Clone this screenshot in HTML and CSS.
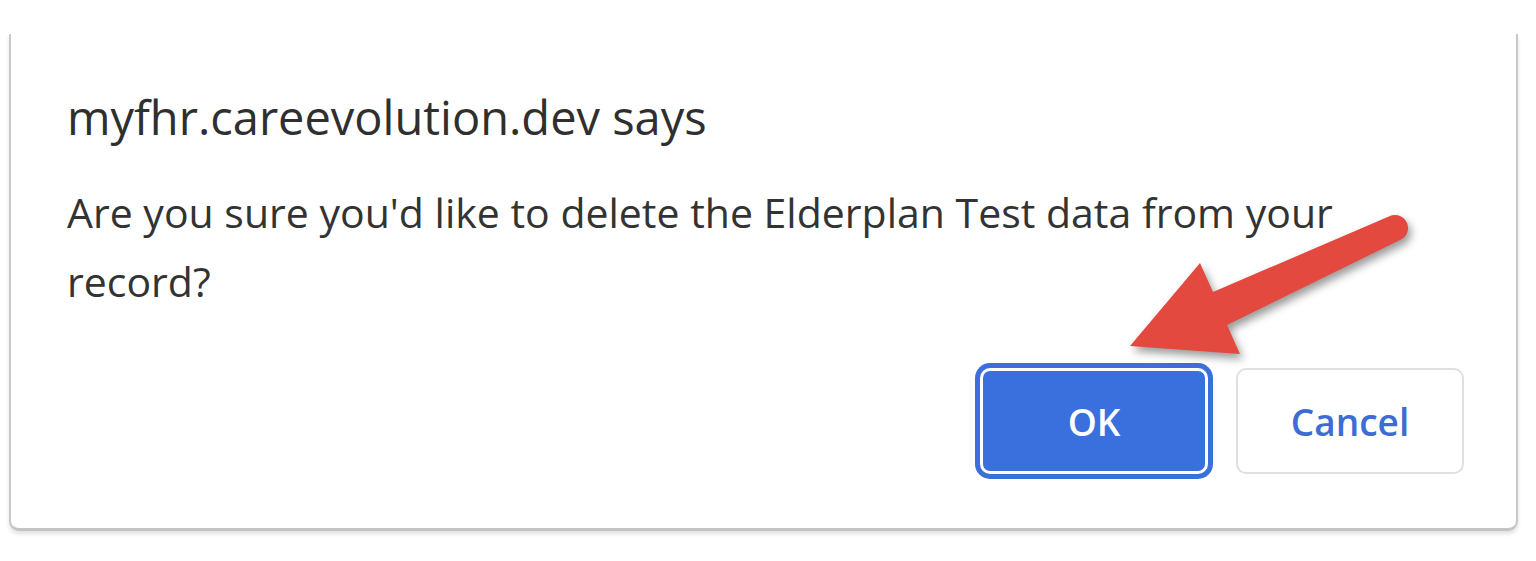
FILE: index.html
```html
<!DOCTYPE html>
<html lang="en">
  <head>
    <meta charset="UTF-8" />
    <meta name="viewport" content="width=device-width, initial-scale=1.0" />
    <title>Confirm delete</title>
    <link rel="stylesheet" href="styles.css">
  </head>
  <body>
    <div class="page">
      <div class="dialog">
        <h1 class="dialog-title">myfhr.careevolution.dev says</h1>
        <p class="dialog-message">
          Are you sure you'd like to delete the Elderplan Test data from your record?
        </p>
        <div class="dialog-actions">
          <button class="btn btn-primary">OK</button>
          <button class="btn btn-secondary">Cancel</button>
        </div>
      </div>

      <!-- annotation arrow pointing at OK -->
      <svg class="callout-arrow" width="310" height="175" viewBox="0 0 310 175">
        <path d="M10 146 L80 63 L93 92 L270 16 A13 13 0 0 1 280 40 L107 125 L120 154 Z" fill="#e4493f" />
      </svg>
    </div>
  </body>
</html>
```

FILE: styles.css
```css
* {
  margin: 0;
  padding: 0;
  box-sizing: border-box;
}

body {
  background-color: #ffffff;
  font-family: "Open Sans", "Noto Sans", Arial, sans-serif;
  color: #333;
}

.page {
  position: relative;
  width: 1536px;
  height: 561px;
  padding-top: 34px;
  padding-left: 9px;
}

.dialog {
  width: 1509px;
  background-color: #fff;
  border: 2px solid #c8c8c8;
  border-top: none;
  border-bottom: 3px solid #c4c4c4;
  border-radius: 0 0 10px 10px;
  box-shadow: 0 3px 4px rgba(0, 0, 0, 0.12);
  padding: 57px 52px 54px 56px;
}

.dialog-title {
  font-size: 47px;
  line-height: 52px;
  font-weight: 400;
  color: #2f2f2f;
}

.dialog-message {
  margin-top: 35px;
  font-size: 41px;
  line-height: 69px;
  color: #333;
  max-width: 1340px;
}

.dialog-actions {
  display: flex;
  justify-content: flex-end;
  gap: 28px;
  margin-top: 52px;
}

.btn {
  width: 228px;
  height: 106px;
  border-radius: 10px;
  font-family: "Open Sans", "Noto Sans", Arial, sans-serif;
  font-size: 37px;
  font-weight: 600;
  cursor: pointer;
}

.btn-primary {
  background-color: #3a70de;
  color: #fff;
  border: 3px solid #fff;
  box-shadow: 0 0 0 5px #3a6fdc;
}

.btn-secondary {
  background-color: #fff;
  color: #3c6cd4;
  border: 2px solid #e0e0e0;
}

.callout-arrow {
  position: absolute;
  left: 1120px;
  top: 200px;
  filter: drop-shadow(3px 5px 4px rgba(0, 0, 0, 0.4));
}
```
